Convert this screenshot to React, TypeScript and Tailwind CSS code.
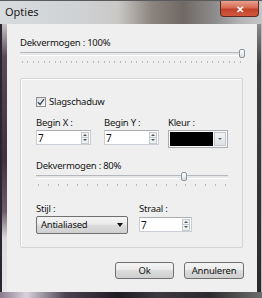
import React from "react";

const font = { fontFamily: '"Noto Sans", "Open Sans", Arial, sans-serif' };

function Ticks({ count }: { count: number }) {
  return (
    <div className="flex justify-between px-[2px] mt-[3px]">
      {Array.from({ length: count }).map((_, i) => (
        <div key={i} className="w-px h-[2px] bg-[#b9bcbf]" />
      ))}
    </div>
  );
}

function Slider({ width, pos, ticks }: { width: number; pos: number; ticks: number }) {
  return (
    <div style={{ width }} className="flex flex-col">
      <div className="relative h-[9px] flex items-center">
        <div className="w-full h-[4px] bg-[#e4e6e8] border-t border-[#b4b8bc] border-b border-b-[#ffffff]" />
        <div
          className="absolute top-0 w-[6px] h-[9px] rounded-[2px] border border-[#8f959b] bg-[linear-gradient(180deg,#ffffff,#d9dde1)]"
          style={{ left: pos }}
        />
      </div>
      <Ticks count={ticks} />
    </div>
  );
}

function Spin() {
  return (
    <div className="flex flex-col w-[8px] h-[12px] border border-[#c4c9cf] bg-[#eef1f4]">
      <div className="flex-1 flex items-center justify-center border-b border-[#c4c9cf]">
        <div className="w-0 h-0 border-l-[2px] border-r-[2px] border-b-[2px] border-l-transparent border-r-transparent border-b-[#555]" />
      </div>
      <div className="flex-1 flex items-center justify-center">
        <div className="w-0 h-0 border-l-[2px] border-r-[2px] border-t-[2px] border-l-transparent border-r-transparent border-t-[#555]" />
      </div>
    </div>
  );
}

function NumInput({ w }: { w: number }) {
  return (
    <div
      style={{ width: w }}
      className="h-[15px] flex items-center justify-between pl-[1px] pr-[1px] bg-white border border-[#c9ced4] border-t-[#abadb3]"
    >
      <span className="text-[10px] leading-none text-[#111]">7</span>
      <Spin />
    </div>
  );
}

function Btn({ w, label }: { w: number; label: string }) {
  return (
    <div
      style={{ width: w }}
      className="h-[17px] flex items-center justify-center rounded-[3px] border border-[#707070] bg-[linear-gradient(180deg,#f4f4f4_0%,#ebebeb_45%,#dddddd_50%,#cfcfcf_100%)] text-[9.5px] tracking-[-0.2px] leading-none text-[#111]"
    >
      {label}
    </div>
  );
}

export default function App() {
  return (
    <div style={font} className="w-[262px] h-[298px] flex flex-col overflow-hidden bg-[#3a3636]">
      {/* Title bar */}
      <div className="h-[24px] flex items-start border-t border-[#5a5a5a] bg-[linear-gradient(90deg,#d9dcde_0%,#cfd2d4_30%,#c9c8c6_45%,#8b847e_58%,#6f6964_70%,#8d8c8c_82%,#b3b5b7_92%,#c3c5c7_100%)]">
        <div className="flex-1 pl-[5px] pt-[5px] text-[11px] leading-[12px] text-[#1a1a1a]">Opties</div>
        <div className="w-[39px] h-[16px] mr-[3px] rounded-b-[4px] border border-t-0 border-[#5b2a22] bg-[linear-gradient(180deg,#e9a08e_0%,#d76b53_45%,#c2412a_55%,#d25a3e_100%)] flex items-center justify-center">
          <span className="text-white text-[10px] font-bold leading-none">✕</span>
        </div>
      </div>
      <div className="flex-1 flex">
        {/* left frame */}
        <div className="w-[7px] flex">
          <div className="w-[2px] bg-[#2a2530]" />
          <div className="flex-1 bg-[linear-gradient(180deg,#c8c4c6_0%,#5a4a58_12%,#3e3040_50%,#6c5c68_70%,#dcdcdc_80%,#e8e8e8_100%)]" />
        </div>
        {/* client */}
        <div className="flex-1 bg-[#efefef] pl-[13px] pt-[13px] text-[#141414] text-[9.5px] tracking-[-0.25px] leading-[12px]">
          <div>Dekvermogen : 100%</div>
          <div>
            <Slider width={223} pos={219} ticks={41} />
          </div>
          {/* group box */}
          <div className="mt-[15px] w-[223px] h-[170px] border border-[#d2d5d8] rounded-[2px] shadow-[inset_1px_1px_0_#ffffff] pl-[15px] pt-[17px]">
            <div className="flex items-center gap-[3px]">
              <div className="w-[10px] h-[10px] border border-[#8e8f8f] bg-[linear-gradient(135deg,#dcdcdc,#fafafa)] flex items-center justify-center">
                <svg width="8" height="8" viewBox="0 0 8 8">
                  <path d="M1 4.2 L3.1 6.4 L7 1.2" fill="none" stroke="#3a4b66" strokeWidth="1.4" />
                </svg>
              </div>
              <span>Slagschaduw</span>
            </div>
            <div className="flex mt-[9px]">
              <div className="w-[68px] flex flex-col gap-[1px]">
                <span>Begin X :</span>
                <NumInput w={55} />
              </div>
              <div className="w-[64px] flex flex-col gap-[1px]">
                <span>Begin Y :</span>
                <NumInput w={55} />
              </div>
              <div className="flex flex-col gap-[1px]">
                <span>Kleur :</span>
                <div className="w-[60px] h-[18px] flex items-center border border-[#a9aeb3] bg-[#fafafa] p-[1px] gap-[1px]">
                  <div className="w-[43px] h-full bg-black" />
                  <div className="flex-1 h-full border border-[#c2c6ca] bg-[linear-gradient(180deg,#f2f3f4,#dfe2e5)] flex items-center justify-center">
                    <div className="w-0 h-0 border-l-[2px] border-r-[2px] border-t-[2px] border-l-transparent border-r-transparent border-t-[#666]" />
                  </div>
                </div>
              </div>
            </div>
            <div className="mt-[12px]">Dekvermogen : 80%</div>
            <div>
              <Slider width={192} pos={145} ticks={20} />
            </div>
            <div className="flex mt-[17px]">
              <div className="w-[103px] flex flex-col gap-[1px]">
                <span>Stijl :</span>
                <div className="w-[92px] h-[18px] flex items-center justify-between px-[4px] rounded-[2px] border border-[#707070] bg-[linear-gradient(180deg,#f4f4f4_0%,#ebebeb_45%,#dddddd_50%,#cfcfcf_100%)]">
                  <span>Antialiased</span>
                  <div className="w-0 h-0 border-l-[3px] border-r-[3px] border-t-[4px] border-l-transparent border-r-transparent border-t-[#111]" />
                </div>
              </div>
              <div className="flex flex-col gap-[2px]">
                <span>Straal :</span>
                <NumInput w={53} />
              </div>
            </div>
          </div>
          <div className="flex justify-end w-[224px] gap-[10px] mt-[14px]">
            <Btn w={59} label="Ok" />
            <Btn w={60} label="Annuleren" />
          </div>
        </div>
        {/* right frame */}
        <div className="w-[5px] flex">
          <div className="flex-1 bg-[linear-gradient(180deg,#8c8c8c_0%,#404040_15%,#2a2a2a_100%)]" />
          <div className="w-[1px] bg-[#bcbcbc]" />
        </div>
      </div>
      {/* bottom frame */}
      <div className="h-[6px] bg-[linear-gradient(90deg,#8a7c8e_0%,#d9d3dc_10%,#4b4350_25%,#1f1b22_45%,#3d3940_60%,#2c2a2d_80%,#6e6e6e_100%)]" />
    </div>
  );
}
